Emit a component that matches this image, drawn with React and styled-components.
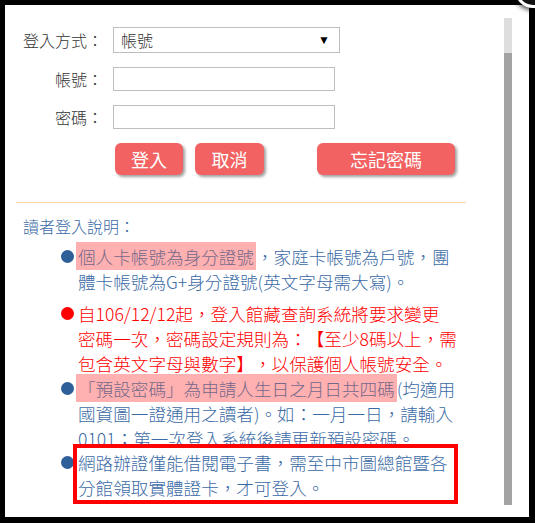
import React from "react";
import styled, { createGlobalStyle } from "styled-components";

const GlobalStyle = createGlobalStyle`
  html, body { margin: 0; padding: 0; background: #000; }
  body {
    font-family: "Noto Sans CJK TC", "Noto Sans", sans-serif;
    font-weight: 300;
    text-spacing-trim: space-all;
  }
`;

const Frame = styled.div`
  position: relative;
  width: 535px;
  height: 523px;
  box-sizing: border-box;
  padding: 5px 6px 6px 5px;
  background: #000;
  overflow: hidden;
`;

const Panel = styled.div`
  display: flex;
  height: 512px;
  background: #fff;
`;

const Content = styled.div`
  width: 499px;
  padding-top: 22px;
  box-sizing: border-box;
`;

const ScrollCol = styled.div`
  display: flex;
  flex-direction: column;
  width: 8px;
  height: 487px;
  margin-top: 13px;
`;

const ScrollTrack = styled.div`
  height: 35px;
  background: #dedede;
`;

const ScrollThumb = styled.div`
  flex: 1;
  background: #a3a3a3;
`;

const CloseButton = styled.div`
  position: absolute;
  left: 515px;
  top: -28px;
  width: 36px;
  height: 36px;
  box-sizing: border-box;
  border-radius: 50%;
  background: #111;
  border: 3px solid #fff;
  box-shadow: 0 0 5px 2px rgba(0, 0, 0, 0.75);
`;

const Form = styled.div`
  display: grid;
  grid-template-columns: 98px auto;
  column-gap: 10px;
  row-gap: 14px;
  align-items: center;
`;

const Label = styled.label`
  font-size: 16px;
  line-height: 20px;
  color: #333;
  text-align: right;
  white-space: nowrap;
`;

const FakeSelect = styled.div`
  display: flex;
  align-items: center;
  justify-content: space-between;
  width: 227px;
  height: 26px;
  box-sizing: border-box;
  border: 1px solid #bdbdbd;
  padding: 0 9px 0 7px;
  font-size: 16px;
  color: #333;
`;

const Caret = styled.span`
  font-family: "DejaVu Sans", sans-serif;
  font-size: 12px;
  color: #000;
`;

const TextInput = styled.input`
  width: 222px;
  height: 24px;
  box-sizing: border-box;
  border: 1px solid #bdbdbd;
  outline: none;
  margin: 0;
  padding: 0 4px;
  font-size: 14px;
`;

const ButtonRow = styled.div`
  display: flex;
  margin-top: 14px;
  padding-left: 110px;
`;

const Button = styled.button`
  width: ${(p) => p.$w}px;
  height: 32px;
  margin-left: ${(p) => p.$ml || 0}px;
  border: none;
  border-radius: 6px;
  background: #f26262;
  color: #fff;
  font-family: "Noto Sans CJK TC", sans-serif;
  font-weight: 400;
  font-size: 18px;
  line-height: 32px;
  padding: 0;
  box-shadow: 2px 2px 3px rgba(0, 0, 0, 0.38);
`;

const Divider = styled.div`
  width: 450px;
  height: 1px;
  margin: 27px 0 0 11px;
  background: #fbd3a4;
`;

const Heading = styled.div`
  margin-top: 11px;
  padding-left: 18px;
  font-size: 16px;
  line-height: 25px;
  color: #3a6aa5;
`;

const List = styled.ul`
  list-style: none;
  margin: 5px 0 0;
  padding: 0 0 0 56px;
`;

const Item = styled.li`
  display: flex;
  align-items: flex-start;
  margin-top: ${(p) => p.$mt || 0}px;
  color: ${(p) => p.$color};
`;

const Dot = styled.span`
  flex: none;
  width: 13px;
  height: 13px;
  margin-top: ${(p) => p.$mt || 6}px;
  margin-right: 4px;
  border-radius: 50%;
  background: ${(p) => p.$color};
`;

const ItemText = styled.div`
  width: 382px;
  font-size: 17.6px;
  line-height: 25px;
`;

const BoxedText = styled(ItemText)`
  width: 375px;
  margin-left: -5px;
  padding: 2px 1px 0;
  border: 4px solid #ff0000;
`;

const Mark = styled.span`
  background: #ffb0b0;
  color: #75688a;
  padding: 2px 2px 1px 2px;
  margin-left: -2px;
`;

const BLUE = "#3a6aa5";
const RED = "#ff0000";

export default function App() {
  return (
    <>
      <GlobalStyle />
      <Frame>
        <Panel>
          <Content>
            <Form>
              <Label>登入方式：</Label>
              <FakeSelect>
                <span>帳號</span>
                <Caret>▼</Caret>
              </FakeSelect>
              <Label>帳號：</Label>
              <TextInput type="text" />
              <Label>密碼：</Label>
              <TextInput type="password" />
            </Form>
            <ButtonRow>
              <Button $w={68}>登入</Button>
              <Button $w={69} $ml={12}>取消</Button>
              <Button $w={138} $ml={53}>忘記密碼</Button>
            </ButtonRow>
            <Divider />
            <Heading>讀者登入說明：</Heading>
            <List>
              <Item $color={BLUE}>
                <Dot $color="#2f5f99" />
                <ItemText>
                  <Mark>個人卡帳號為身分證號</Mark>，家庭卡帳號為戶號，團
                  <br />
                  體卡帳號為G+身分證號(英文字母需大寫)。
                </ItemText>
              </Item>
              <Item $color={RED} $mt={7}>
                <Dot $color={RED} />
                <ItemText>
                  自106/12/12起，登入館藏查詢系統將要求變更
                  <br />
                  密碼一次，密碼設定規則為：【至少8碼以上，需
                  <br />
                  包含英文字母與數字】，以保護個人帳號安全。
                </ItemText>
              </Item>
              <Item $color={BLUE}>
                <Dot $color="#2f5f99" />
                <ItemText>
                  <Mark>「預設密碼」為申請人生日之月日共四碼</Mark>(均適用
                  <br />
                  國資圖一證通用之讀者)。如：一月一日，請輸入
                  <br />
                  0101；第一次登入系統後請更新預設密碼。
                </ItemText>
              </Item>
              <Item $color={BLUE} $mt={-7}>
                <Dot $color="#2f5f99" $mt={12} />
                <BoxedText>
                  網路辦證僅能借閱電子書，需至中市圖總館暨各
                  <br />
                  分館領取實體證卡，才可登入。
                </BoxedText>
              </Item>
            </List>
          </Content>
          <ScrollCol>
            <ScrollTrack />
            <ScrollThumb />
          </ScrollCol>
        </Panel>
        <CloseButton />
      </Frame>
    </>
  );
}
